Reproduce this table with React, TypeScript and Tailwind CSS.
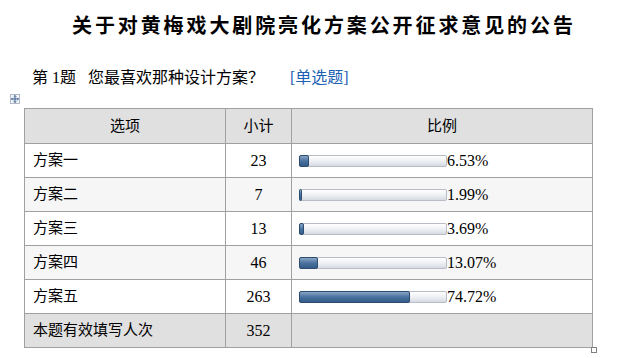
import React from "react";

const rows = [
  { name: "方案一", count: 23, pct: 6.53 },
  { name: "方案二", count: 7, pct: 1.99 },
  { name: "方案三", count: 13, pct: 3.69 },
  { name: "方案四", count: 46, pct: 13.07 },
  { name: "方案五", count: 263, pct: 74.72 },
];

const font = { fontFamily: '"Liberation Serif", "Noto Sans CJK SC", serif' };

const Bar = ({ pct }: { pct: number }) => (
  <div className="relative h-[12px] w-[148px] rounded-[2px] border border-[#b8bcc4] bg-gradient-to-b from-[#ffffff] via-[#eef0f4] to-[#d6dae2]">
    <div
      className="absolute left-[-1px] top-[-1px] bottom-[-1px] rounded-[2px] border border-[#2c4d70] bg-gradient-to-b from-[#8aa6c4] via-[#4a72a0] to-[#355c88]"
      style={{ width: `${Math.max((pct / 100) * 148, 3)}px` }}
    />
  </div>
);

export default function App() {
  return (
    <div className="relative h-[358px] w-[617px] bg-white text-black" style={font}>
      <h1 className="pt-[14px] pl-[72px] text-[20px] font-bold leading-[24px] tracking-[2.9px]">
        关于对黄梅戏大剧院亮化方案公开征求意见的公告
      </h1>
      <div className="mt-[31px] flex pl-[32px] text-[16px] leading-[18px]">
        <span>第 1题&nbsp;&nbsp; 您最喜欢那种设计方案？</span>
        <span className="ml-[26px] text-[#1c5fb5]">[单选题]</span>
      </div>
      <div className="ml-[10px] mt-[7px] flex h-[10px] w-[10px] items-center justify-center border border-[#b0b8c8] bg-[#f4f6fa]">
        <svg width="8" height="8" viewBox="0 0 8 8" fill="none" stroke="#3a5a8c" strokeWidth="1">
          <path d="M4 0.5v7M0.5 4h7" />
          <path d="M2.8 1.7L4 0.5l1.2 1.2M2.8 6.3L4 7.5l1.2-1.2M1.7 2.8L0.5 4l1.2 1.2M6.3 2.8L7.5 4l-1.2 1.2" />
        </svg>
      </div>
      <table className="ml-[24px] mt-[4px] border-collapse text-[15px]">
        <thead>
          <tr className="h-[35px] bg-[#e0e0e0]">
            <th className="w-[201px] border border-[#a0a0a0] font-normal">选项</th>
            <th className="w-[66px] border border-[#a0a0a0] font-normal">小计</th>
            <th className="w-[301px] border border-[#a0a0a0] font-normal">比例</th>
          </tr>
        </thead>
        <tbody>
          {rows.map((r, i) => (
            <tr key={r.name} className={`h-[34px] ${i % 2 === 1 ? "bg-[#f6f6f6]" : "bg-white"}`}>
              <td className="border border-[#a0a0a0] pl-[8px]">{r.name}</td>
              <td className="border border-[#a0a0a0] text-center text-[16px]">{r.count}</td>
              <td className="border border-[#a0a0a0] pl-[7px]">
                <div className="flex items-center">
                  <Bar pct={r.pct} />
                  <span className="text-[16px] leading-none">{r.pct.toFixed(2)}%</span>
                </div>
              </td>
            </tr>
          ))}
          <tr className="h-[34px] bg-[#e0e0e0]">
            <td className="border border-[#a0a0a0] pl-[8px]">本题有效填写人次</td>
            <td className="border border-[#a0a0a0] text-center text-[16px]">352</td>
            <td className="border border-[#a0a0a0]"></td>
          </tr>
        </tbody>
      </table>
      <div className="absolute left-[591px] top-[347px] h-[6px] w-[6px] border border-[#808080] bg-white" />
    </div>
  );
}
